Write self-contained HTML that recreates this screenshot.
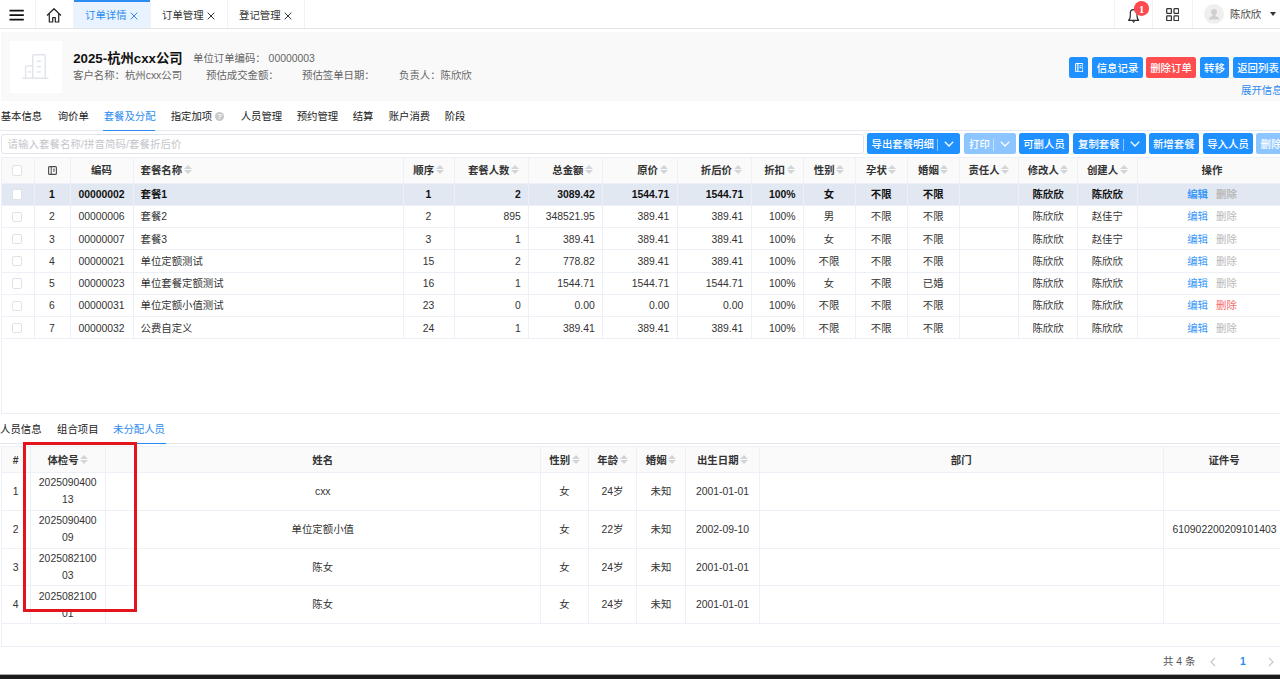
<!DOCTYPE html>
<html lang="zh-CN">
<head>
<meta charset="utf-8">
<title>订单详情</title>
<style>
*{box-sizing:border-box;margin:0;padding:0}
html,body{width:1280px;height:679px;overflow:hidden;background:#fff}
body{position:relative;font-family:"Liberation Sans","Noto Sans CJK SC",sans-serif;font-size:10.4px;color:#333;line-height:1}
.abs{position:absolute;white-space:nowrap}
/* top bar */
#topbar{position:absolute;left:0;top:0;width:1280px;height:29px;background:#fff;border-bottom:1px solid #e4e4e4}
.vsep{position:absolute;top:0;width:1px;height:28px;background:#f2f2f2}
.tab{position:absolute;top:0;height:28px;line-height:31px;font-size:10.4px;color:#333;text-align:left;padding-left:11px}
.tx{margin-left:3.500px;vertical-align:-.5px}
.tab.on{background:#e9f3ff;color:#2d8cf0;border-top:2px solid #2d8cf0;line-height:27px}
/* header panel */
#hpanel{position:absolute;left:1px;top:31.600px;width:1279px;height:69.600px;background:#f9f9f9}
#logo{position:absolute;left:8.500px;top:9.500px;width:52.300px;height:51.500px;background:#fff}
.btn{font-weight:500;position:absolute;height:21px;line-height:23.800px;border-radius:2.500px;background:#1e90ff;color:#fff;font-size:10.4px;text-align:center;white-space:nowrap;overflow:hidden}
.btn.red{background:#ff4d4f}
.btn.dis{background:#8cc5ff}
/* nav tabs */
.nav{margin-left:.7px;position:absolute;top:112px;font-size:10.4px;color:#222;white-space:nowrap}
.nav.on{color:#2d8cf0}
/* tables */
table{border-collapse:collapse;table-layout:fixed;position:absolute}
td,th{border:1px solid #edf0f6;font-size:10.4px;overflow:hidden;white-space:nowrap;font-weight:normal;color:#333;padding:0}
th{background:#fafafa;font-weight:bold;color:#333}
.sort{display:inline-block;width:8px;height:10px;position:relative;vertical-align:middle;top:-1.500px;margin-left:1.500px}
.sort:before{content:"";position:absolute;left:0;top:0;border:4px solid transparent;border-bottom:4.5px solid #d2d4d8;border-top:0}
.sort:after{content:"";position:absolute;left:0;top:5.5px;border:4px solid transparent;border-top:4.5px solid #d2d4d8;border-bottom:0}
#t1{left:.5px;top:157px;width:1286px}
#t1 th{height:25.600px;padding-top:2px}
#t1 td{height:22.270px;padding-top:2px}
#t1 tr.sel td{background:#e2e8f2;font-weight:bold;color:#111}
.r{text-align:right;padding-right:7.200px}
.c{text-align:center}
.l{text-align:left;padding-left:7px}
.cb{position:relative;left:-.2px;top:-.8px;display:inline-block;width:10.300px;height:10.300px;border:1px solid #dfe2e8;border-radius:2px;background:#fff;vertical-align:middle}
.lnk{color:#3c9af8}.gry{color:#b9b9b9}.redt{color:#f56c6c}
#t2{left:.5px;top:446px;width:1312px}
#t2 th{height:26px;padding-top:3px}
#t2 td{height:37.750px;text-align:center;padding-top:2px}
.bsep{display:inline-block;width:1px;height:12px;background:rgba(255,255,255,.5);vertical-align:-2.500px;margin:0 6px 0 3px}
.chev{vertical-align:1px}
</style>
</head>
<body>
<div id="topbar">
  <svg class="abs" style="left:9px;top:8px" width="16" height="14" viewBox="0 0 16 14"><path d="M.5 2.600h14.300M.5 7.100h14.300M.5 11.600h14.300" stroke="#111" stroke-width="1.550" fill="none"/></svg>
  <div class="vsep" style="left:35px"></div>
  <svg class="abs" style="left:46px;top:6.500px" width="16" height="16" viewBox="0 0 16 16"><path d="M1.300 8.200 8 1.700l6.700 6.500M3.300 7v8h3.400v-4.300h2.600V15h3.400V7" stroke="#222" stroke-width="1.200" fill="none" stroke-linejoin="round" stroke-linecap="round"/></svg>
  <div class="vsep" style="left:73px"></div>
  <div class="tab on" style="left:74px;width:76px">订单详情<svg class="tx" width="8" height="8" viewBox="0 0 8 8"><path d="M.7.7l6.600 6.600M7.300.7L.7 7.300" stroke="currentColor" stroke-width="1" fill="none"/></svg></div>
  <div class="vsep" style="left:150px"></div>
  <div class="tab" style="left:151px;width:76px">订单管理<svg class="tx" width="8" height="8" viewBox="0 0 8 8"><path d="M.7.7l6.600 6.600M7.300.7L.7 7.300" stroke="currentColor" stroke-width="1" fill="none"/></svg></div>
  <div class="vsep" style="left:227px"></div>
  <div class="tab" style="left:228px;width:76px">登记管理<svg class="tx" width="8" height="8" viewBox="0 0 8 8"><path d="M.7.7l6.600 6.600M7.300.7L.7 7.300" stroke="currentColor" stroke-width="1" fill="none"/></svg></div>
  <div class="vsep" style="left:304px"></div>
  <div class="vsep" style="left:1114px"></div>
  <div class="vsep" style="left:1152px"></div>
  <div class="vsep" style="left:1192px"></div>
  <svg class="abs" style="left:1127px;top:7px" width="14" height="17" viewBox="0 0 14 17"><path d="M1.600 13.300C3.300 12.200 3.300 10.600 3.300 8.200V5.900a3.350 3.350 0 0 1 6.700 0v2.300c0 2.400 0 4 1.700 5.100z" stroke="#2a2a2a" stroke-width="1.150" fill="none" stroke-linejoin="round"/><path d="M5.100 14.300h3.100l-1.550 1.600z" fill="#2a2a2a"/></svg>
  <div class="abs" style="left:1134.300px;top:1px;width:14.600px;height:14.600px;border-radius:7.300px;background:#fc4a4f;color:#fff;font-size:10.500px;line-height:17px;overflow:hidden;font-weight:bold;text-align:center;font-family:'Liberation Serif',serif">1</div>
  <svg class="abs" style="left:1165.700px;top:7.500px" width="13.400" height="13.400" viewBox="0 0 13.400 13.400"><g fill="none" stroke="#333" stroke-width="1.250"><rect x=".7" y=".7" width="4.700" height="4.700" rx=".7"/><rect x="8" y=".7" width="4.700" height="4.700" rx=".7"/><rect x=".7" y="8" width="4.700" height="4.700" rx=".7"/><rect x="8" y="8" width="4.700" height="4.700" rx=".7"/></g></svg>
  <div class="abs" style="left:1204px;top:4px;width:20px;height:20px;border-radius:10px;background:#efefef;overflow:hidden"><svg width="20" height="20" viewBox="0 0 20 20"><circle cx="10" cy="8" r="3" fill="#d0d0d0"/><path d="M4.800 15.600c.3-2.300 2.200-3 3.700-3.500V10h3v2.100c1.500.5 3.400 1.200 3.700 3.500z" fill="#d0d0d0"/></svg></div>
  <div class="abs" style="left:1230px;top:9.800px;font-size:10.4px;color:#444">陈欣欣</div>
  <div class="abs" style="left:1269.700px;top:12.300px;border:3px solid transparent;border-top:4px solid #333;border-bottom:0"></div>
</div>

<div id="hpanel">
  <div id="logo"><svg class="abs" style="left:12.500px;top:12.800px" width="27" height="26" viewBox="0 0 27 26"><g fill="none" stroke="#e2e6ec" stroke-width="1.500" stroke-linecap="round" stroke-linejoin="round"><path d="M10.750 24.200V2.200a1.500 1.500 0 0 1 1.500-1.500h9.500a1.500 1.500 0 0 1 1.500 1.500v22M3.600 24.200V13.200a1.500 1.500 0 0 1 1.500-1.500h5.650M.9 24.200h25"/><path d="M15.300 7.300h3.200M15.300 12.700h3.200M15.300 18h3.200M6.200 18h2.300"/></g></svg></div>
  <div class="abs" style="left:72.200px;top:20.800px;font-size:13.300px;font-weight:bold;color:#111">2025-杭州cxx公司</div>
  <div class="abs" style="left:192px;top:22.300px;color:#666">单位订单编码： 00000003</div>
  <div class="abs" style="left:72px;top:39.500px;color:#666">客户名称：杭州cxx公司</div>
  <div class="abs" style="left:205px;top:39.500px;color:#666">预估成交金额：</div>
  <div class="abs" style="left:301px;top:39.500px;color:#666">预估签单日期：</div>
  <div class="abs" style="left:398px;top:39.500px;color:#666">负责人：陈欣欣</div>
  <div class="btn" style="left:1068px;top:25px;width:19px"><svg style="position:absolute;left:5.500px;top:6.300px" width="8.500" height="9.300" viewBox="0 0 9 10"><rect x=".6" y=".6" width="7.800" height="8.800" rx=".8" fill="none" stroke="#fff" stroke-width="1.100"/><path d="M3 .6v8.800M4.800 3h2M4.800 5h2" stroke="#fff" stroke-width="1.250" fill="none"/></svg></div>
  <div class="btn" style="left:1091px;top:25px;width:51px">信息记录</div>
  <div class="btn red" style="left:1145px;top:25px;width:50px">删除订单</div>
  <div class="btn" style="left:1199px;top:25px;width:29px">转移</div>
  <div class="btn" style="left:1231.5px;top:25px;width:51px">返回列表</div>
  <div class="abs" style="left:1240px;top:54px;color:#2d8cf0">展开信息</div>
</div>

<div class="nav" style="left:0">基本信息</div>
<div class="nav" style="left:57px">询价单</div>
<div class="nav on" style="left:103px">套餐及分配</div>
<div class="nav" style="left:170px">指定加项</div>
<div class="abs" style="left:215px;top:111.700px;width:9.200px;height:9.200px;border-radius:4.600px;background:#c8c8c8;color:#fff;font-size:7.500px;line-height:9.600px;text-align:center;font-weight:bold">?</div>
<div class="nav" style="left:240px">人员管理</div>
<div class="nav" style="left:296px">预约管理</div>
<div class="nav" style="left:352px">结算</div>
<div class="nav" style="left:388px">账户消费</div>
<div class="nav" style="left:444px">阶段</div>
<div class="abs" style="left:0;top:130px;width:1280px;height:1px;background:#e6e9ef"></div>
<div class="abs" style="left:103px;top:129.5px;width:52px;height:1.5px;background:#2d8cf0"></div>

<div class="abs" style="left:1px;top:133.5px;width:863.300px;height:20.5px;border:1px solid #e1e4ea;border-radius:3px;color:#c4c6cb;line-height:19px;padding-left:5.500px;letter-spacing:.11px">请输入套餐名称/拼音简码/套餐折后价</div>

<div class="abs" style="left:1px;top:157px;width:1290px;height:257px;border:1px solid #ebeef5"></div>
<table id="t1"><colgroup><col style="width:33px"><col style="width:36px"><col style="width:63px"><col style="width:270px"><col style="width:51px"><col style="width:74.5px"><col style="width:74px"><col style="width:74.5px"><col style="width:74px"><col style="width:52px"><col style="width:52px"><col style="width:52.5px"><col style="width:51.5px"><col style="width:59.5px"><col style="width:59px"><col style="width:59.5px"><col style="width:150px"></colgroup>
<tr><th class="c"><span class="cb"></span></th><th class="c"><svg style="vertical-align:-.5px" width="9" height="9" viewBox="0 0 9 9"><rect x=".6" y=".6" width="7.800" height="7.800" rx="1" fill="none" stroke="#4a4a4a" stroke-width="1.100"/><path d="M3.200 .6v7.800M5 3.200h1.800M5 5h1.800" stroke="#4a4a4a" stroke-width="1" fill="none"/></svg></th><th class="c">编码</th><th class="l">套餐名称<span class="sort"></span></th><th class="c">顺序<span class="sort"></span></th><th class="r" style="padding-right:9px">套餐人数<span class="sort"></span></th><th class="r" style="padding-right:9px">总金额<span class="sort"></span></th><th class="r" style="padding-right:9px">原价<span class="sort"></span></th><th class="r" style="padding-right:9px">折后价<span class="sort"></span></th><th class="r" style="padding-right:8px">折扣<span class="sort"></span></th><th class="c">性别<span class="sort"></span></th><th class="c">孕状<span class="sort"></span></th><th class="c">婚姻<span class="sort"></span></th><th class="c">责任人<span class="sort"></span></th><th class="c">修改人<span class="sort"></span></th><th class="c">创建人<span class="sort"></span></th><th class="c">操作</th></tr>
<tr class="sel"><td class="c"><span class="cb"></span></td><td class="c">1</td><td class="c">00000002</td><td class="l">套餐1</td><td class="c">1</td><td class="r">2</td><td class="r">3089.42</td><td class="r">1544.71</td><td class="r">1544.71</td><td class="r" style="padding-right:7px">100%</td><td class="c">女</td><td class="c">不限</td><td class="c">不限</td><td class="c"></td><td class="c">陈欣欣</td><td class="c">陈欣欣</td><td class="c"><span class="lnk">编辑</span><span style="margin-left:8px" class="gry">删除</span></td></tr>
<tr><td class="c"><span class="cb"></span></td><td class="c">2</td><td class="c">00000006</td><td class="l">套餐2</td><td class="c">2</td><td class="r">895</td><td class="r">348521.95</td><td class="r">389.41</td><td class="r">389.41</td><td class="r" style="padding-right:7px">100%</td><td class="c">男</td><td class="c">不限</td><td class="c">不限</td><td class="c"></td><td class="c">陈欣欣</td><td class="c">赵佳宁</td><td class="c"><span class="lnk">编辑</span><span style="margin-left:8px" class="gry">删除</span></td></tr>
<tr><td class="c"><span class="cb"></span></td><td class="c">3</td><td class="c">00000007</td><td class="l">套餐3</td><td class="c">3</td><td class="r">1</td><td class="r">389.41</td><td class="r">389.41</td><td class="r">389.41</td><td class="r" style="padding-right:7px">100%</td><td class="c">女</td><td class="c">不限</td><td class="c">不限</td><td class="c"></td><td class="c">陈欣欣</td><td class="c">赵佳宁</td><td class="c"><span class="lnk">编辑</span><span style="margin-left:8px" class="gry">删除</span></td></tr>
<tr><td class="c"><span class="cb"></span></td><td class="c">4</td><td class="c">00000021</td><td class="l">单位定额测试</td><td class="c">15</td><td class="r">2</td><td class="r">778.82</td><td class="r">389.41</td><td class="r">389.41</td><td class="r" style="padding-right:7px">100%</td><td class="c">不限</td><td class="c">不限</td><td class="c">不限</td><td class="c"></td><td class="c">陈欣欣</td><td class="c">陈欣欣</td><td class="c"><span class="lnk">编辑</span><span style="margin-left:8px" class="gry">删除</span></td></tr>
<tr><td class="c"><span class="cb"></span></td><td class="c">5</td><td class="c">00000023</td><td class="l">单位套餐定额测试</td><td class="c">16</td><td class="r">1</td><td class="r">1544.71</td><td class="r">1544.71</td><td class="r">1544.71</td><td class="r" style="padding-right:7px">100%</td><td class="c">女</td><td class="c">不限</td><td class="c">已婚</td><td class="c"></td><td class="c">陈欣欣</td><td class="c">陈欣欣</td><td class="c"><span class="lnk">编辑</span><span style="margin-left:8px" class="gry">删除</span></td></tr>
<tr><td class="c"><span class="cb"></span></td><td class="c">6</td><td class="c">00000031</td><td class="l">单位定额小值测试</td><td class="c">23</td><td class="r">0</td><td class="r">0.00</td><td class="r">0.00</td><td class="r">0.00</td><td class="r" style="padding-right:7px">100%</td><td class="c">不限</td><td class="c">不限</td><td class="c">不限</td><td class="c"></td><td class="c">陈欣欣</td><td class="c">陈欣欣</td><td class="c"><span class="lnk">编辑</span><span style="margin-left:8px" class="redt">删除</span></td></tr>
<tr><td class="c"><span class="cb"></span></td><td class="c">7</td><td class="c">00000032</td><td class="l">公费自定义</td><td class="c">24</td><td class="r">1</td><td class="r">389.41</td><td class="r">389.41</td><td class="r">389.41</td><td class="r" style="padding-right:7px">100%</td><td class="c">不限</td><td class="c">不限</td><td class="c">不限</td><td class="c"></td><td class="c">陈欣欣</td><td class="c">陈欣欣</td><td class="c"><span class="lnk">编辑</span><span style="margin-left:8px" class="gry">删除</span></td></tr>
</table>

<div class="btn" style="left:866.5px;top:133.400px;width:93.5px;height:20.500px;line-height:24.300px;text-align:left;padding-left:5px">导出套餐明细<span class="bsep"></span><svg class="chev" width="10" height="6" viewBox="0 0 10 6"><path d="M.8.800l4.200 4.200L9.200.800" stroke="#fff" stroke-width="1.250" fill="none"/></svg></div>
<div class="btn dis" style="left:964px;top:133.400px;width:52px;height:20.500px;line-height:24.300px;text-align:left;padding-left:5px">打印<span class="bsep"></span><svg class="chev" width="10" height="6" viewBox="0 0 10 6"><path d="M.8.800l4.200 4.200L9.200.800" stroke="#fff" stroke-width="1.250" fill="none"/></svg></div>
<div class="btn" style="left:1019px;top:133.400px;width:50px;height:20.500px;line-height:24.300px">可删人员</div>
<div class="btn" style="left:1073px;top:133.400px;width:72.500px;height:20.500px;line-height:24.300px;text-align:left;padding-left:5px">复制套餐<span class="bsep"></span><svg class="chev" width="10" height="6" viewBox="0 0 10 6"><path d="M.8.800l4.200 4.200L9.200.800" stroke="#fff" stroke-width="1.250" fill="none"/></svg></div>
<div class="btn" style="left:1148.5px;top:133.400px;width:50.5px;height:20.500px;line-height:24.300px">新增套餐</div>
<div class="btn" style="left:1203px;top:133.400px;width:50px;height:20.500px;line-height:24.300px">导入人员</div>
<div class="btn dis" style="left:1256.300px;top:133.400px;width:50px;height:20.500px;line-height:24.300px">删除套餐</div>

<div class="abs" style="left:0;top:424.500px;font-size:10.4px;color:#222">人员信息</div>
<div class="abs" style="left:57px;top:424.500px;font-size:10.4px;color:#222">组合项目</div>
<div class="abs" style="left:113px;top:424.500px;font-size:10.4px;color:#2d8cf0">未分配人员</div>
<div class="abs" style="left:0;top:442.500px;width:1280px;height:1.500px;background:#e4e7ed"></div>
<div class="abs" style="left:113px;top:442.500px;width:52.500px;height:1.500px;background:#2d8cf0"></div>
<div class="abs" style="left:1px;top:446.500px;width:1290px;height:200px;border:1px solid #ebeef5"></div>
<table id="t2"><colgroup><col style="width:29.5px"><col style="width:74.5px"><col style="width:435.5px"><col style="width:48px"><col style="width:48px"><col style="width:49px"><col style="width:74px"><col style="width:403.5px"><col style="width:150px"></colgroup>
<tr><th class="c">#</th><th class="c">体检号<span class="sort"></span></th><th class="c">姓名</th><th class="c">性别<span class="sort"></span></th><th class="c">年龄<span class="sort"></span></th><th class="c">婚姻<span class="sort"></span></th><th class="c">出生日期<span class="sort"></span></th><th class="c">部门</th><th class="c" style="padding-right:28px">证件号</th></tr>
<tr><td>1</td><td style="line-height:17px;padding-top:0">2025090400<br>13</td><td>cxx</td><td>女</td><td>24岁</td><td>未知</td><td>2001-01-01</td><td></td><td class="l" style="text-align:left;padding-left:9px"></td></tr>
<tr><td>2</td><td style="line-height:17px;padding-top:0">2025090400<br>09</td><td>单位定额小值</td><td>女</td><td>22岁</td><td>未知</td><td>2002-09-10</td><td></td><td class="l" style="text-align:left;padding-left:9px">610902200209101403</td></tr>
<tr><td>3</td><td style="line-height:17px;padding-top:0">2025082100<br>03</td><td>陈女</td><td>女</td><td>24岁</td><td>未知</td><td>2001-01-01</td><td></td><td class="l" style="text-align:left;padding-left:9px"></td></tr>
<tr><td>4</td><td style="line-height:17px;padding-top:0">2025082100<br>01</td><td>陈女</td><td>女</td><td>24岁</td><td>未知</td><td>2001-01-01</td><td></td><td class="l" style="text-align:left;padding-left:9px"></td></tr>
</table>

<div class="abs" style="left:1163px;top:657px;color:#555">共 4 条</div>
<svg class="abs" style="left:1210px;top:656.800px" width="6" height="10" viewBox="0 0 6 10"><path d="M5 1L1 5l4 4" stroke="#c0c4cc" stroke-width="1.1" fill="none"/></svg>
<div class="abs" style="left:1240px;top:657px;color:#2d8cf0;font-weight:bold">1</div>
<svg class="abs" style="left:1268px;top:656.800px" width="6" height="10" viewBox="0 0 6 10"><path d="M1 1l4 4-4 4" stroke="#c0c4cc" stroke-width="1.1" fill="none"/></svg>
<div class="abs" style="left:0;top:674px;width:1280px;height:5px;background:#1c1c1c;border-top:1px solid #a8a8a8"></div>
<div class="abs" style="left:23px;top:442.400px;width:113.500px;height:170px;border:3px solid #e3141b"></div>
</body>
</html>
